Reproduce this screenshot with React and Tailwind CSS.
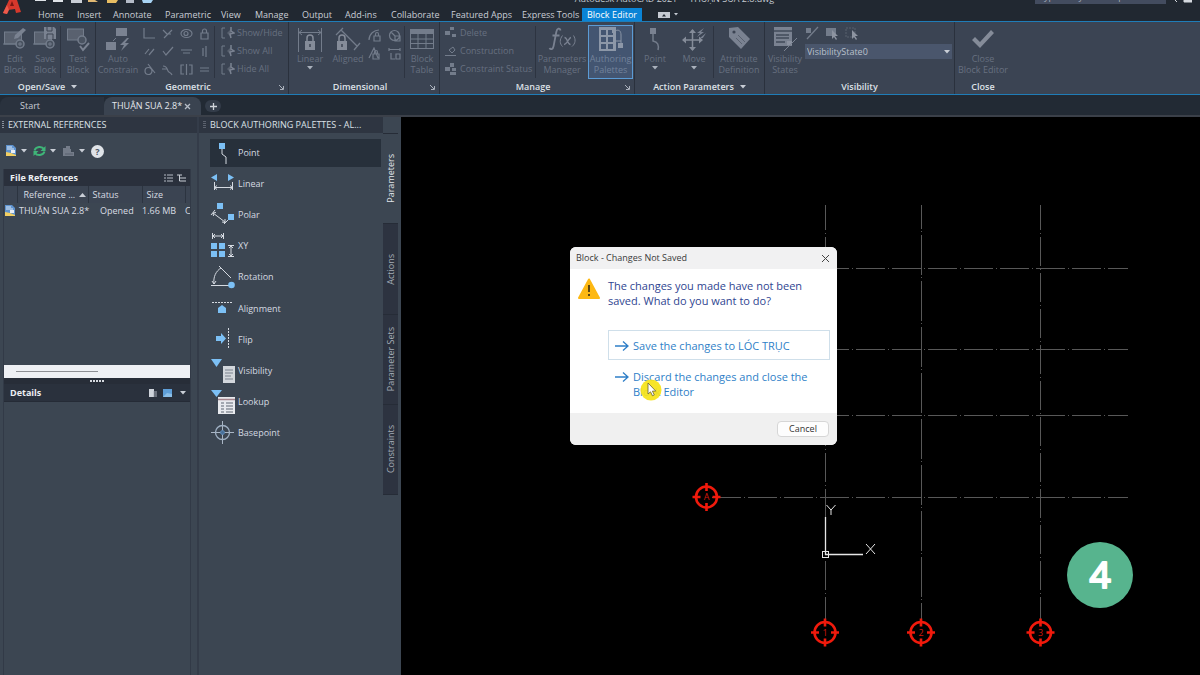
import React from "react";

const DIM = "#737c8b";
const BLUE = "#7cc0f5";

function Svg({ w, h, children, className = "", label }) {
  return (
    <svg
      width={w}
      height={h}
      viewBox={`0 0 ${w} ${h}`}
      fill="none"
      className={`shrink-0 ${className}`}
      aria-hidden={label ? undefined : true}
      aria-label={label}
    >
      {children}
    </svg>
  );
}

function Caret({ className = "text-[#c9ced6]" }) {
  return (
    <Svg w={6} h={4} className={className}>
      <path d="M0 0h6L3 3.6z" fill="currentColor" />
    </Svg>
  );
}

/* ---------- ribbon icons ---------- */

const BlockBase = () => (
  <g>
    <rect x="1.5" y="6" width="17" height="12" fill="#59616f" stroke={DIM} />
    <circle cx="17" cy="18" r="4" stroke={DIM} strokeWidth="1.5" fill="#4a5361" />
    <path d="M0 18h14M17 16v4M15 18h4" stroke={DIM} />
  </g>
);

const EditBlock = () => (
  <Svg w={24} h={26}>
    <BlockBase />
    <path d="M11 13l1-4 8-7 3 2-8 8z" fill="#7a8291" />
  </Svg>
);
const SaveBlock = () => (
  <Svg w={24} h={26}>
    <BlockBase />
    <path d="M11 1h10l2 2v10H11z" fill="#7a8291" />
    <path d="M14 1v4h5V1M14 13V8h6v5" stroke="#3c4453" />
  </Svg>
);
const TestBlock = () => (
  <Svg w={24} h={26}>
    <rect x="1.5" y="3" width="16" height="11" fill="#59616f" stroke={DIM} />
    <circle cx="16" cy="14" r="4" stroke={DIM} strokeWidth="1.5" fill="#4a5361" />
    <path d="M14 20l3 4 6-7" stroke="#7a8291" strokeWidth="2" />
  </Svg>
);
const AutoConstrain = () => (
  <Svg w={26} h={26}>
    <path d="M11 2h11v8H11zM1 16h10v8H1z" fill="#7a8291" />
    <path d="M22 12l-7 7h4l-3 6 8-8h-4l4-5z" fill="#7a8291" />
    <path d="M11 12l-3 3" stroke={DIM} />
  </Svg>
);
const LinearDim = () => (
  <Svg w={26} h={26}>
    <path d="M1.5 2v24M24.500 2v24M2 6.500h22M5 4L2 6.500 5 9M21 4l3 2.500L21 9" stroke={DIM} />
    <rect x="8" y="15" width="10" height="9" fill="#858c99" />
    <path d="M10 15v-3a3 3 0 016 0v3" stroke="#858c99" strokeWidth="1.500" />
    <path d="M13 18v3" stroke="#3c4453" strokeWidth="1.500" />
  </Svg>
);
const AlignedDim = () => (
  <Svg w={26} h={26}>
    <path d="M8 2L1 9M25 17l-6 7M6 4l16 16" stroke={DIM} strokeWidth="1.300" />
    <rect x="2" y="15" width="10" height="9" fill="#858c99" />
    <path d="M4 15v-3a3 3 0 016 0v3" stroke="#858c99" strokeWidth="1.500" />
    <path d="M7 18v3" stroke="#3c4453" strokeWidth="1.500" />
  </Svg>
);
const BlockTable = () => (
  <Svg w={26} h={26}>
    <rect x="1.5" y="3.5" width="23" height="19" stroke={DIM} />
    <path d="M1 4h24v4H1z" fill={DIM} />
    <path d="M1 13h24M1 17.500h24M9 8v14M17 8v14" stroke={DIM} />
  </Svg>
);
const Fx = () => (
  <Svg w={28} h={26}>
    <path d="M12.500 4.500C12 1.500 9 2 8.300 6L5.600 20c-.6 3.500-3 4-4.100 2M4.500 9.500h7" stroke="#7a8291" strokeWidth="1.800" />
    <path d="M14.500 9.500c-3 4-3 8 0 11M25.500 9.500c2.500 4 2 8-1.500 11" stroke="#7a8291" />
    <path d="M16.500 11.500c3 0 3 7 6 7M23 11.500c-2 0-4 7-7 7" stroke="#7a8291" strokeWidth="1.300" />
  </Svg>
);
const Authoring = () => (
  <Svg w={26} h={26}>
    <path d="M1 1h17v24H1z" fill="#8c97a8" />
    <path d="M3 4h5v5H3zM10 4h5v5h-5zM3 11h5v5H3zM10 11h5v5h-5zM3 18h5v5H3zM10 18h5v5h-5z" fill="#435571" />
    <path d="M14 2h4v5h-4zM20 17h5v5h-5z" fill="#8c97a8" />
    <path d="M17 5c4-2 6 0 6 4v8M17 15h6" stroke="#8c97a8" />
  </Svg>
);
const PointRibbon = () => (
  <Svg w={16} h={26}>
    <path d="M3 2h6v6H3z" fill="#7a8291" />
    <path d="M6 8v7c5 1 6 4 5 9" stroke={DIM} strokeWidth="1.500" />
  </Svg>
);
const MoveRibbon = () => (
  <Svg w={26} h={26}>
    <path d="M11.500 4v20M2 14h19" stroke="#858c99" strokeWidth="1.500" />
    <path d="M8 7l3.500-4L15 7zM8 21l3.500 4 3.500-4zM5 10.500L1 14l4 3.500zM18 10.500l4 3.500-4 3.500z" fill="#858c99" />
    <path d="M23 2l-7 5h3l-3 4 7-5h-3zM25 7l-6 5h3l-2 3" fill="#7a8291" />
  </Svg>
);
const TagIcon = () => (
  <Svg w={26} h={26}>
    <path d="M3 2l9-1 12 12-9 10L3 11z" fill="#7a8291" />
    <circle cx="8" cy="6" r="1.600" fill="#3c4453" />
    <path d="M12 9l7 7M10 12l6 6" stroke="#59616f" />
  </Svg>
);
const VisStates = () => (
  <Svg w={26} h={26}>
    <path d="M2 1h18v19H2z" fill="#7a8291" />
    <path d="M2 5h18M4 9h13M4 12h13M4 16h9" stroke="#424b59" strokeWidth="1.300" />
    <path d="M15 15h5v4h-5z" fill="#8b92a0" />
    <path d="M25 12L12 25" stroke="#7a8291" />
  </Svg>
);
const CheckIcon = () => (
  <Svg w={26} h={26}>
    <path d="M2 14l3-3 5 5L21 4l3 3-14 15z" fill="#858c99" />
  </Svg>
);

const geomIcons = [
  "M1 1v10h11",
  "M2 3l4 4M3 11l8-8M6 7h4",
  "M1 6.500a5.500 4 0 1011 0a5.500 4 0 10-11 0M4 6.500a2 2 0 104 0a2 2 0 10-4 0",
  "M3 6h7v6H3zM4.500 6V4a2 2 0 014 0v2",
  "M2 9l4-5M6 10l5-6",
  "M2 6l3 4 7-8",
  "M1 5h11M3 8h7",
  "M5 3v8M8 1v11",
  "M2 8a3.500 3.500 0 107 0a3.500 3.500 0 10-7 0M5 1l7 9",
  "M2 3c4 0 4 3 5 5s3 1 4 4M1 6h5",
  "M4 2H1v9h3M9 2h3v9H9M6.500 1v11",
  "M2 5h9M2 8h9",
];

const dimIcons = [
  "M1 11C1 5 6 1 11 1M6 7h6v5H6zM7.500 7V5a1.500 1.500 0 013 0v2",
  "M6.500 1.500a5 5 0 100 10a5 5 0 100-10M3 3l4 4M7 7h5v5H7z",
  "M1 11L6 1l4 10M5 7h6v5H5zM6.500 7V5a1.500 1.500 0 013 0v2",
  "M1 1v3M12 1v3M1 2.500h11M3 6v6h4M8 7h4v5H8z",
];

const Bracket = () => (
  <Svg w={14} h={14}>
    <path d="M4 2H1v10h3" stroke={DIM} />
    <path d="M6 7l4-4v8z" fill="#59616f" />
    <path d="M10 1v4l3 2-4 1 1 4" stroke="#7a8291" strokeWidth="1.500" />
  </Svg>
);

const Nodes = ({ variant }) => (
  <Svg w={14} h={14}>
    {variant === 1 ? (
      <path d="M1 11.500h11M5 6l4-3 2 3-3 3z" stroke={DIM} />
    ) : variant === 2 ? (
      <path d="M1 5h5v4H1zM6 1h4v4H6zM8 6h4v3H8zM6 10h6v3H6z" fill={DIM} />
    ) : (
      <path d="M1 5h5v4H1zM6 1h4v3H6zM8 8h4v3H8z" fill={DIM} />
    )}
  </Svg>
);

/* ---------- ribbon pieces ---------- */

function Big({ icon, lines, w, caret }) {
  return (
    <button className={`flex shrink-0 flex-col items-center pt-1 text-[#677080] ${w}`}>
      {icon}
      <span className="flex flex-col items-center pt-px leading-[11px] whitespace-nowrap">
        {lines.map((l) => (
          <span key={l}>{l}</span>
        ))}
      </span>
      {caret && <Caret className="mt-0.5 text-[#a9b0bb]" />}
    </button>
  );
}

function Panel({ title, w, children, caret, launcher }) {
  return (
    <section className={`flex shrink-0 flex-col border-r border-[#2a313d] ${w}`}>
      <div className="flex h-[58px]">{children}</div>
      <div
        className={`relative flex h-[14px] items-center justify-center gap-1.5 font-semibold text-[#dde1e7] ${launcher ? "pr-2" : ""}`}
      >
        <h2>{title}</h2>
        {caret && <Caret />}
        {launcher && (
          <button aria-label={`${title} settings`} className="absolute right-1 bottom-1">
            <Svg w={5} h={5}>
              <path d="M0 0l4 4M4.500 1v3.500H1" stroke="#aab1bc" />
            </Svg>
          </button>
        )}
      </div>
    </section>
  );
}

const Divider = () => <div className="mt-1 h-[52px] w-px shrink-0 bg-[#2d3441]" />;

function TextRows({ rows, className }) {
  return (
    <div className={`flex flex-col pt-0.5 ${className}`}>
      {rows.map(([icon, label]) => (
        <button key={label} className="flex h-[18px] items-center gap-0.5 whitespace-nowrap text-[#677080]">
          {icon}
          {label}
        </button>
      ))}
    </div>
  );
}

function Ribbon() {
  return (
    <div className="flex h-[74px] shrink-0 overflow-hidden border-y border-[#1f7db8] bg-[#3b4453]">
      <Panel title="Open/Save" w="w-[96px]" caret>
        <Big w="w-[30px]" icon={<EditBlock />} lines={["Edit", "Block"]} />
        <Big w="w-[30px]" icon={<SaveBlock />} lines={["Save", "Block"]} />
        <Divider />
        <Big w="w-[34px]" icon={<TestBlock />} lines={["Test", "Block"]} />
      </Panel>
      <Panel title="Geometric" w="w-[193px]" launcher>
        <Big w="w-[44px]" icon={<AutoConstrain />} lines={["Auto", "Constrain"]} />
        <div className="grid w-[74px] grid-cols-4 grid-rows-3 pt-0.5 pb-0.5">
          {geomIcons.map((d, i) => (
            <button key={d} aria-label={`Constraint ${i + 1}`} className="grid place-items-center">
              <Svg w={13} h={13}>
                <path d={d} stroke={DIM} strokeWidth="1.200" />
              </Svg>
            </button>
          ))}
        </div>
        <Divider />
        <TextRows
          className="pl-1.5"
          rows={[
            [<Bracket />, "Show/Hide"],
            [<Bracket />, "Show All"],
            [<Bracket />, "Hide All"],
          ]}
        />
      </Panel>
      <Panel title="Dimensional" w="w-[151px]" launcher>
        <Big w="w-[42px]" icon={<LinearDim />} lines={["Linear"]} caret />
        <Big w="w-[34px]" icon={<AlignedDim />} lines={["Aligned"]} />
        <div className="grid h-[40px] w-[39px] grid-cols-2 pt-1">
          {dimIcons.map((d, i) => (
            <button key={d} aria-label={`Dimension ${i + 1}`} className="grid place-items-center">
              <Svg w={13} h={13}>
                <path d={d} stroke={DIM} strokeWidth="1.200" />
              </Svg>
            </button>
          ))}
        </div>
        <Divider />
        <Big w="w-[34px]" icon={<BlockTable />} lines={["Block", "Table"]} />
      </Panel>
      <Panel title="Manage" w="w-[195px]" launcher>
        <TextRows
          className="w-[95px] pl-1"
          rows={[
            [<Nodes />, "Delete"],
            [<Nodes variant={1} />, "Construction"],
            [<Nodes variant={2} />, "Constraint Status"],
          ]}
        />
        <Divider />
        <Big w="w-[52px]" icon={<Fx />} lines={["Parameters", "Manager"]} />
        <button className="mt-[3px] flex h-[54px] w-[45px] shrink-0 flex-col items-center border border-[#5b9bd5] bg-[#435571] text-[#72829b]">
          <Authoring />
          <span className="pt-px leading-[11px]">
            Authoring
            <br />
            Palettes
          </span>
        </button>
      </Panel>
      <Panel title="Action Parameters" w="w-[130px]" caret>
        <Big w="w-[40px]" icon={<PointRibbon />} lines={["Point"]} caret />
        <Big w="w-[38px]" icon={<MoveRibbon />} lines={["Move"]} caret />
        <Divider />
        <Big w="w-[50px]" icon={<TagIcon />} lines={["Attribute", "Definition"]} />
      </Panel>
      <Panel title="Visibility" w="w-[190px]">
        <Big w="w-[40px]" icon={<VisStates />} lines={["Visibility", "States"]} />
        <div className="flex w-[147px] flex-col gap-1">
          <div className="flex gap-1.5 pt-1">
            <Svg w={14} h={14}>
              <path d="M1 2h5v5H1z" fill={DIM} />
              <path d="M13 1L2 13" stroke={DIM} strokeWidth="1.300" />
            </Svg>
            <Svg w={14} h={14}>
              <path d="M1 2h10v8H1z" fill={DIM} />
              <path d="M7 4v9l2-2 2 3 1-1-2-3h3z" fill="#8d94a1" />
            </Svg>
            <Svg w={14} h={14}>
              <path d="M1 2h9v9H1z" stroke="#59616f" strokeDasharray="2 1" />
              <path d="M7 4v9l2-2 2 3 1-1-2-3h3z" fill="#8d94a1" />
            </Svg>
          </div>
          <div className="relative">
            <select
              aria-label="Visibility state"
              className="block h-[15px] w-full appearance-none bg-[#4a566c] px-0.5 leading-[15px] text-[#b9c0cb] outline-none"
            >
              <option>VisibilityState0</option>
            </select>
            <span className="pointer-events-none absolute top-1.5 right-0.5">
              <Caret />
            </span>
          </div>
        </div>
      </Panel>
      <section className="flex w-[56px] shrink-0 flex-col items-center">
        <div className="flex h-[58px]">
          <Big w="w-[56px]" icon={<CheckIcon />} lines={["Close", "Block Editor"]} />
        </div>
        <h2 className="h-[14px] leading-[14px] font-semibold text-[#dde1e7]">Close</h2>
      </section>
    </div>
  );
}

/* ---------- header ---------- */

const menu = ["Home", "Insert", "Annotate", "Parametric", "View", "Manage", "Output", "Add-ins", "Collaborate", "Featured Apps", "Express Tools"];

function Header() {
  return (
    <header className="flex h-[21px] shrink-0 bg-[#212831]">
      <Svg w={30} h={16} label="AutoCAD">
        <path d="M3 13L9 0h8l4 12-5 1-1-4-7 1-1 4z" fill="#d6382c" />
        <path d="M10 6l2-5 2 5z" fill="#7c1713" />
        <path d="M3 13l4-8 2 5-2 4z" fill="#ee5a4b" />
      </Svg>
      <div className="flex flex-1 flex-col">
        <div className="flex h-[8px] justify-between overflow-hidden">
          <Svg w={130} h={8} className="ml-1">
            <path d="M1 0h11v1H1zM19 0h10v2H19z" fill="#dfe3e8" />
            <path d="M37 0h11v3H37z" fill="#c9ced6" />
            <path d="M54 0h7l3 2H54z" fill="#e0b873" />
            <path d="M73 0h11l-2 3H73z" fill="#e8bd62" />
            <path d="M92 0h8v3h-8z" fill="#b5bcc8" />
            <path d="M108 0h11l-2 3h-8z" fill="#a8d3f4" />
          </Svg>
          <div className="-mt-1.5 flex gap-3 pl-[150px] leading-[10px] text-[#c5cad2]">
            <span>Autodesk AutoCAD 2021</span>
            <span>THUẬN SUA 2.8.dwg</span>
          </div>
          <div className="flex gap-2 pr-2">
            <div className="-mt-2 h-[12px] w-[131px] bg-[#434c5f] pl-1 leading-[10px] text-[#a7aebb]">Type a keyword or phrase</div>
            <Svg w={18} h={3}>
              <path d="M1 0l2 2M10 0h8v2h-8z" stroke="#d5d9df" fill="#d5d9df" />
            </Svg>
          </div>
        </div>
        <nav className="flex h-[13px] items-center pl-2">
          <ul className="grid grid-cols-[39px_36px_52px_56px_34px_47px_43px_46px_60px_71px_60px] leading-[13px] whitespace-nowrap text-[#c9ced6]">
            {menu.map((m) => (
              <li key={m}>
                <a href="#">{m}</a>
              </li>
            ))}
          </ul>
          <a href="#" className="h-[13px] w-[60px] bg-[#0a84d6] text-center leading-[13px] whitespace-nowrap text-white">
            Block Editor
          </a>
          <button aria-label="Ribbon display" className="flex items-center gap-1 pl-4">
            <Svg w={12} h={6}>
              <rect width="12" height="6" fill="#c5cad2" />
              <path d="M4 4.500L6 2l2 2.500z" fill="#212831" />
            </Svg>
            <Svg w={4} h={3}>
              <path d="M0 0h4L2 2.500z" fill="#c5cad2" />
            </Svg>
          </button>
        </nav>
      </div>
    </header>
  );
}

function FileTabs() {
  return (
    <div className="flex h-[22px] shrink-0 items-end border-b-2 border-[#3b4049] bg-[#222a34] text-[#c9ced6]">
      <button className="h-[18px] w-[104px] rounded-tl-lg bg-[#2a323e] pl-5 text-left leading-[18px]">Start</button>
      <div className="flex h-[18px] w-[97px] items-center justify-between rounded-t-lg bg-[#3a4350] pr-2.5 pl-2 whitespace-nowrap text-[#e4e7ec]">
        THUẬN SUA 2.8*
        <button aria-label="Close tab">
          <Svg w={7} h={7}>
            <path d="M1 1l5 5M6 1L1 6" stroke="#b5bbc5" strokeWidth="1.300" />
          </Svg>
        </button>
      </div>
      <button aria-label="New tab" className="mb-[3px] ml-1 grid h-[12px] w-[16px] place-items-center rounded-md bg-[#333c49]">
        <Svg w={7} h={7}>
          <path d="M3.500 0v7M0 3.500h7" stroke="#d0d4da" strokeWidth="1.300" />
        </Svg>
      </button>
    </div>
  );
}

/* ---------- palettes ---------- */

const FileIcon = () => (
  <Svg w={12} h={12}>
    <path d="M1 0h7l3 3v8H1z" fill="#5f93cf" />
    <path d="M2 2h5M2 4h7" stroke="#dfeaf7" />
    <path d="M1 11V7l5 1 5 2v1z" fill="#f2cf62" />
    <path d="M6 5h4v3H6z" fill="#e8eef6" />
  </Svg>
);

function ExternalReferences() {
  return (
    <aside className="flex w-[197px] shrink-0 flex-col">
      <h2 className="flex h-[16px] items-center gap-1 bg-[#2e3541] pl-0.5 text-[#dde1e7]">
        <Svg w={2} h={8}>
          <path d="M1 0v8" stroke="#8a919d" strokeWidth="2" strokeDasharray="1 1" />
        </Svg>
        EXTERNAL REFERENCES
      </h2>
      <div className="flex h-[36px] items-center gap-1.5 pl-[5px]">
        <button aria-label="Attach" className="flex items-center gap-1">
          <FileIcon />
          <Caret />
        </button>
        <button aria-label="Refresh" className="flex items-center gap-1">
          <Svg w={13} h={12}>
            <path d="M1.500 5.500C3 1 9 1 11 4M11.500 6.500C10 11 4 11 2 8" stroke="#3fb578" strokeWidth="2" />
            <path d="M12.500 1v5h-5zM.500 11V6h5z" fill="#3fb578" />
          </Svg>
          <Caret />
        </button>
        <button aria-label="Change path" className="flex items-center gap-1">
          <Svg w={13} h={12}>
            <path d="M1 3h3V1h4v3h1v3h3v4H1z" fill="#747c89" />
            <path d="M3 9h8" stroke="#59616f" />
          </Svg>
          <Caret />
        </button>
        <button aria-label="Help" className="grid h-[13px] w-[13px] place-items-center rounded-full bg-[#dfe3e8] leading-[13px] font-bold text-[#4c5563]">
          ?
        </button>
      </div>
      <div className="mr-[6px] ml-[3px] flex flex-1 flex-col border-x border-[#323a47]">
        <div className="flex h-[17px] items-center gap-1 bg-[#2a303c] pr-1 pl-1.5">
          <h3 className="flex-1 font-bold text-[#eceef2]">File References</h3>
          <Svg w={9} h={8}>
            <path d="M0 1h2M3 1h6M0 4h2M3 4h6M0 7h2M3 7h6" stroke="#b5bbc5" />
          </Svg>
          <Svg w={9} h={8}>
            <path d="M0 1h5M2.500 1v6H5M3 4h2M5 4h4M5 7h4" stroke="#c9ced6" />
          </Svg>
        </div>
        <table className="w-full table-fixed text-left whitespace-nowrap text-[#d9dde3]">
          <thead>
            <tr className="h-[17px] bg-[#3b4452]">
              <th className="w-[13px] border-r border-[#2c3440] p-0" />
              <th className="w-[71px] border-r border-[#2c3440] p-0 pl-1.5 font-normal">
                <span className="flex items-center gap-1">
                  Reference ...
                  <Svg w={7} h={4}>
                    <path d="M0 4h7L3.500 0z" fill="#c9ced6" />
                  </Svg>
                </span>
              </th>
              <th className="w-[54px] border-r border-[#2c3440] p-0 pl-1 font-normal">Status</th>
              <th className="w-[43px] border-r border-[#2c3440] p-0 pl-1 font-normal">Size</th>
              <th className="p-0" />
            </tr>
          </thead>
          <tbody>
            <tr className="h-[16px]">
              <td className="p-0">
                <FileIcon />
              </td>
              <td className="p-0 pl-0.5">THUẬN SUA 2.8*</td>
              <td className="p-0 pl-3">Opened</td>
              <td className="p-0">1.66 MB</td>
              <td className="overflow-hidden p-0">C</td>
            </tr>
          </tbody>
        </table>
        <div className="h-[146px]" />
        <div className="flex h-[13px] items-center bg-[#eef0f4] px-3">
          <div className="h-px w-[82px] bg-[#8d8f94]" />
        </div>
        <div className="flex h-[6px] items-center justify-center bg-[#272d38]">
          <Svg w={14} h={2}>
            <path d="M0 1h14" stroke="#d5d9df" strokeWidth="2" strokeDasharray="2 1" />
          </Svg>
        </div>
        <div className="flex h-[18px] items-center gap-1 border-b border-[#252b36] bg-[#2a313d] pr-1 pl-1.5">
          <h3 className="flex-1 font-bold text-[#eceef2]">Details</h3>
          <Svg w={10} h={10}>
            <path d="M1 1h5v8H1z" fill="#cfd4db" />
            <path d="M5 4h4M5 6h4M5 8h4" stroke="#aab1bc" />
          </Svg>
          <Svg w={10} h={10}>
            <path d="M1 1h9v8H1z" fill="#5f9fd8" />
            <path d="M1 9l4-4 5 1v3z" fill="#8bbfe8" />
          </Svg>
          <span className="pl-1">
            <Caret />
          </span>
        </div>
      </div>
    </aside>
  );
}

const W = "#d5dae1";
const params = [
  ["Point", <><path d="M9 3h6v6H9z" fill={BLUE} /><path d="M12 9v5l4 3v7" stroke={W} /></>],
  ["Linear", <><path d="M7 3v7L1 6.500zM18 3v7l6-3.500z" fill={BLUE} /><path d="M4.500 11v8M22.500 11v8M5 16.500h17M7 14.500l-2.500 2L7 18.500M20 14.500l2.500 2-2.500 2" stroke={W} /></>],
  ["Polar", <><path d="M7 1h6v6H7zM18 12h6v6h-6z" fill={BLUE} /><path d="M5 8l-4 5M18 18l-4 4M3 11l12 9M6 10.500l-3 .5.500 3M12 20l3 .500V17" stroke={W} /></>],
  ["XY", <><path d="M1 10h6v6H1zM9 10h6v6H9zM1 18h6v6H1zM9 18h6v6H9z" fill={BLUE} /><path d="M2.500 0v6M13.500 0v6M3 3h10M18 12.500h6M18 23.500h6M21 13v10M19 15l2-2 2 2M19 21l2 2 2-2M5 1L3 3l2 2M11 1l2 2-2 2" stroke={W} /></>],
  ["Rotation", <><path d="M1 21.500h18M9 2l12 12M4 20C3 13 6 7 11 4M2 17l2 3 2-3" stroke={W} /><circle cx="21.500" cy="21" r="3.300" fill={BLUE} /></>],
  ["Alignment", <><path d="M2 6.500h21" stroke={W} strokeDasharray="2 1" /><path d="M8 17v-5l4-3 4 3v5z" fill={BLUE} /></>],
  ["Flip", <><path d="M6 9h5V6l5 5.500-5 5.500v-3H6z" fill={BLUE} /><path d="M18.500 1v21" stroke={W} strokeDasharray="2 1" /></>],
  ["Visibility", <><path d="M1 1h11L6.500 9z" fill={BLUE} /><path d="M13 8h12v17H13z" fill="#d3d7dc" /><path d="M15 12h8M15 15h8M15 18h6M15 21h8" stroke="#7b828e" /></>],
  ["Lookup", <><path d="M1 1h11L6.500 8z" fill={BLUE} /><path d="M8 8h17v17H8z" fill="#e8eaee" /><path d="M8 10.500h17" stroke="#a5848d" strokeWidth="1.500" /><path d="M11 14h3M16 14h7M11 17h3M16 17h7M11 20h3M16 20h7M11 23h3M16 23h7" stroke="#5f6672" /></>],
  ["Basepoint", <><path d="M12.500 1v23M1 12.500h23" stroke="#aab6c5" /><circle cx="12.500" cy="12.500" r="7" stroke="#9fb0c3" strokeWidth="1.300" /><circle cx="12.500" cy="12.500" r="2" stroke="#5b86b0" fill="#48709a" /></>],
];

function VTab({ label, active }) {
  return (
    <button
      className={`grid flex-1 place-items-center border-b border-[#262c37] ${active ? "bg-[#3c4652] text-[#e1e5ea]" : "bg-[#2d3340] text-[#a4abb6]"}`}
    >
      <span className="rotate-180 leading-[14px] whitespace-nowrap [writing-mode:vertical-rl]">{label}</span>
    </button>
  );
}

function AuthoringPalette() {
  return (
    <aside className="flex w-[204px] shrink-0 border-l-2 border-[#343c49]">
      <div className="flex w-[184px] flex-col">
        <h2 className="flex h-[16px] items-center gap-1 bg-[#2e3541] pl-1 whitespace-nowrap text-[#dde1e7]">
          <Svg w={3} h={8}>
            <path d="M1 0v8M3 0v8" stroke="#8a919d" strokeDasharray="1 1" />
          </Svg>
          BLOCK AUTHORING PALETTES - AL...
        </h2>
        <ul className="mt-[4px] ml-[11px] grid h-[312px] auto-rows-fr text-[#d5dae1]">
          {params.map(([name, art], i) => (
            <li key={name} className="flex items-center">
              <button className={`flex h-[28px] w-[171px] items-center gap-0.5 ${i === 0 ? "bg-[#27303b]" : ""}`}>
                <Svg w={26} h={26}>
                  {art}
                </Svg>
                {name}
              </button>
            </li>
          ))}
        </ul>
      </div>
      <div className="mt-[16px] flex h-[362px] w-[15px] flex-col border-t border-[#262c37]">
        <VTab label="Parameters" active />
        <VTab label="Actions" />
        <VTab label="Parameter Sets" />
        <VTab label="Constraints" />
      </div>
    </aside>
  );
}

/* ---------- drawing area ---------- */

function Bubble({ x, y, label }) {
  return (
    <g transform={`translate(${x} ${y})`}>
      <circle r="10.500" stroke="#f01a0c" strokeWidth="2.600" />
      <path d="M-14 0h8M6 0h8M0-14v8M0 6v8" stroke="#f01a0c" strokeWidth="2.600" />
      <text y="3" textAnchor="middle" fontSize="9" fill="#d0180c">
        {label}
      </text>
    </g>
  );
}

function Drawing() {
  return (
    <svg className="absolute inset-0 h-full w-full" viewBox="401 117 799 558" preserveAspectRatio="xMinYMin slice" fill="none" aria-label="Grid drawing">
      <g stroke="#585858" strokeDasharray="29 3 1 3">
        <path d="M825.500 205v414" strokeDashoffset="4" />
        <path d="M921.500 205v414" strokeDasharray="40 2 1 3" strokeDashoffset="16" />
        <path d="M1040.500 205v414" strokeDashoffset="4" />
        <path d="M748 268.500h380M748 349.500h380M748 415.500h380M712 497.500h416" />
      </g>
      <Bubble x={706.5} y={497} label="A" />
      <Bubble x={825} y={632.5} label="1" />
      <Bubble x={921} y={632.5} label="2" />
      <Bubble x={1040.5} y={632.5} label="3" />
      <g stroke="#e6e6e6">
        <path d="M825.500 517v38M825 554.500h38" strokeWidth="1.300" />
        <rect x="822.500" y="551.500" width="6" height="6" />
        <path d="M826.500 505l4.500 5 4.500-5M831 510v5M866 544l9 10M875 544l-9 10" />
      </g>
    </svg>
  );
}

const Arrow = () => (
  <Svg w={14} h={12} className="mt-0.5">
    <path d="M0 6h13M8 1.500L13 6l-5 4.500" stroke="#2f7fc8" strokeWidth="1.300" />
  </Svg>
);

function Dialog() {
  return (
    <div
      role="dialog"
      aria-labelledby="dlg-title"
      className="absolute top-[130px] left-[169px] w-[267px] overflow-hidden rounded-md bg-white"
    >
      <div className="flex h-[22px] items-center justify-between bg-[#f1f1f2] pr-[7px] pl-1.5 text-[#3a3a3a]">
        <h2 id="dlg-title">Block - Changes Not Saved</h2>
        <button aria-label="Close">
          <Svg w={9} h={9}>
            <path d="M1 1l7 7M8 1L1 8" stroke="#444" />
          </Svg>
        </button>
      </div>
      <div className="flex h-[144px] gap-2 pr-[7px] pl-2">
        <Svg w={22} h={22} className="mt-[9px]">
          <path d="M11 1.500L21 20H1z" fill="#fdb813" stroke="#fdb813" strokeWidth="2" strokeLinejoin="round" />
          <path d="M11 7v7M11 16v2" stroke="#4a3a10" strokeWidth="1.800" />
        </Svg>
        <div className="flex flex-1 flex-col pt-[9px] text-[11px] leading-[15px]">
          <p className="pr-3 text-[#2f4591]">
            The changes you made have not been
            <br />
            saved. What do you want to do?
          </p>
          <button className="mt-[22px] flex h-[30px] items-center gap-1 border border-[#cfdfea] pl-1.5 text-left whitespace-nowrap text-[#2f7fc8]">
            <Arrow />
            Save the changes to LÓC TRỤC
          </button>
          <button className="mt-[9px] flex gap-1 pl-[7px] text-left whitespace-nowrap text-[#2f7fc8]">
            <Arrow />
            <span>
              Discard the changes and close the
              <br />
              Block Editor
            </span>
          </button>
        </div>
      </div>
      <div className="flex h-[32px] items-center justify-end bg-[#f0f0f0] pr-2">
        <button className="h-[16px] w-[52px] rounded-sm border border-[#d6d6d6] bg-[#fdfdfd] leading-[14px] text-[#333]">Cancel</button>
      </div>
      <svg width="22" height="22" viewBox="0 0 22 22" className="absolute top-[132px] left-[70px]" aria-hidden="true">
        <circle cx="11" cy="11" r="10.500" fill="#f6e31a" fillOpacity=".93" />
        <path d="M8 4v11l2.500-2.200 2 4 1.800-.9-1.900-3.800h3.400z" fill="#fff" stroke="#6b6330" strokeWidth=".8" />
      </svg>
    </div>
  );
}

export default function App() {
  return (
    <div className="flex h-screen flex-col overflow-hidden bg-[#3c4652] font-['Open_Sans','Noto_Sans',sans-serif] text-[9px] leading-[12px]">
      <Header />
      <Ribbon />
      <FileTabs />
      <main className="flex min-h-0 flex-1">
        <ExternalReferences />
        <AuthoringPalette />
        <div className="relative flex-1 overflow-hidden bg-black">
          <Drawing />
          <Dialog />
          <svg width="66" height="66" viewBox="0 0 66 66" className="absolute top-[425px] left-[666px]" aria-label="Step 4">
            <circle cx="33" cy="33" r="33" fill="#57b48e" />
            <text x="33" y="46" textAnchor="middle" fontSize="37" fontWeight="400" fill="#fff" stroke="#fff" strokeWidth="2.200" strokeLinejoin="round">
              4
            </text>
          </svg>
        </div>
      </main>
    </div>
  );
}
